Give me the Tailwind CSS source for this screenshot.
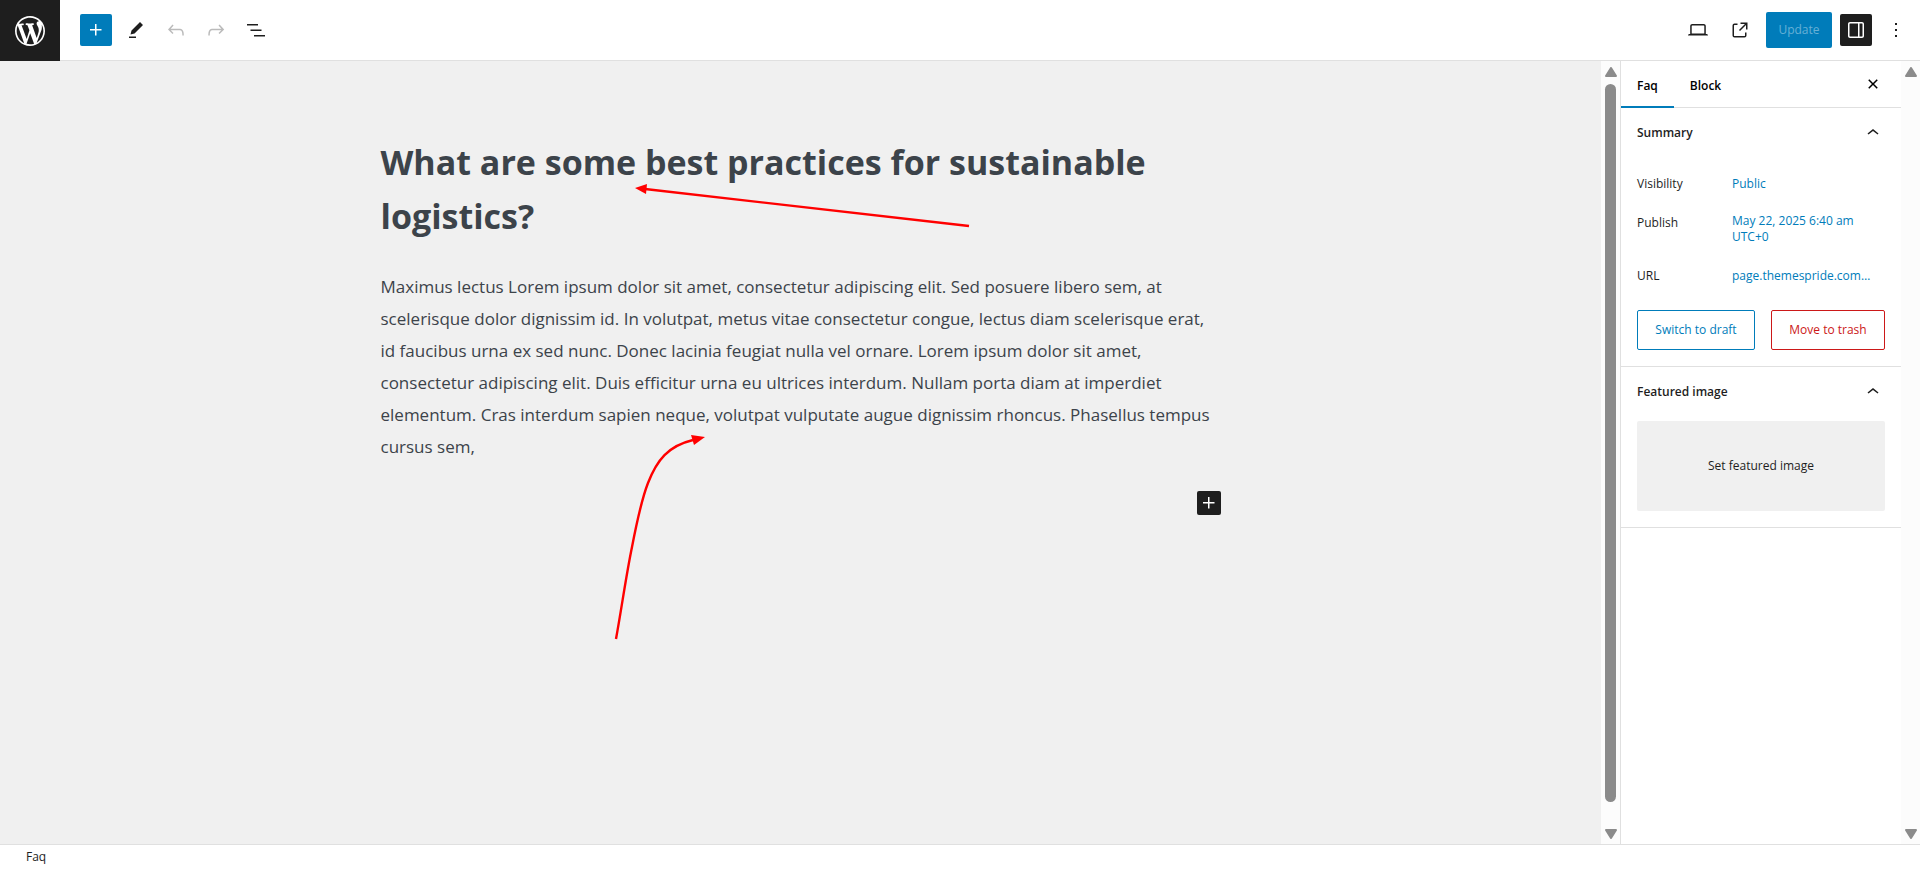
<!DOCTYPE html>
<html lang="en">
<head>
    <meta charset="UTF-8">
    <meta name="viewport" content="width=device-width, initial-scale=1.0">
    <title>Edit Faq</title>
    <script src="https://cdn.jsdelivr.net/npm/@tailwindcss/browser@4"></script>
</head>
<body class="flex flex-col h-screen overflow-hidden bg-white text-[#1e1e1e] text-xs font-['Open_Sans',sans-serif]">

    <!-- Top toolbar -->
    <header class="flex items-stretch justify-between shrink-0 h-[61px]">
        <div class="flex items-stretch">
            <a href="#" aria-label="View Posts" class="w-[60px] bg-[#1e1e1e] text-white flex items-center justify-center">
                <svg class="size-9" viewBox="-2 -2 24 24" fill="currentColor"><path d="M20 10c0-5.51-4.49-10-10-10C4.48 0 0 4.49 0 10c0 5.52 4.48 10 10 10 5.51 0 10-4.48 10-10zM7.78 15.37L4.37 6.22c.55-.02 1.17-.08 1.17-.08.5-.06.44-1.13-.06-1.11 0 0-1.45.11-2.37.11-.18 0-.37 0-.58-.01C4.12 2.69 6.87 1.11 10 1.11c2.33 0 4.45.87 6.05 2.34-.68-.11-1.65.39-1.65 1.58 0 .74.45 1.36.9 2.1.35.61.55 1.36.55 2.46 0 1.49-1.4 5-1.4 5l-3.03-8.37c.54-.02.82-.17.82-.17.5-.05.44-1.25-.06-1.22 0 0-1.44.12-2.38.12-.87 0-2.33-.12-2.33-.12-.5-.03-.56 1.2-.06 1.22l.92.08 1.26 3.41zM17.41 10c.24-.64.74-1.87.43-4.25.7 1.29 1.05 2.71 1.05 4.25 0 3.29-1.73 6.24-4.4 7.78.97-2.59 1.94-5.2 2.92-7.78zM6.1 18.09C3.12 16.65 1.11 13.53 1.11 10c0-1.3.23-2.48.72-3.59C3.25 10.3 4.67 14.2 6.1 18.09zm4.03-6.63l2.58 6.98c-.86.29-1.76.45-2.71.45-.79 0-1.57-.11-2.29-.33.81-2.38 1.62-4.74 2.42-7.10z"/></svg>
            </a>
        </div>
        <div class="flex flex-1 items-center justify-between border-b border-[#e0e0e0] pl-5 pr-2">
            <div class="flex items-center gap-2">
                <button aria-label="Add block" class="size-8 rounded-[2px] bg-[#007cba] text-white flex items-center justify-center">
                    <svg class="size-6" viewBox="0 0 24 24" fill="currentColor"><path d="M11 12.5V17.5H12.5V12.5H17.5V11H12.5V6H11V11H6V12.5H11Z"/></svg>
                </button>
                <button aria-label="Tools" class="size-8 flex items-center justify-center">
                    <svg class="size-6" viewBox="0 0 24 24" fill="currentColor"><path d="m19 7-3-3-8.5 8.5-1 4 4-1L19 7Zm-7 11.5H5V20h7v-1.5Z"/></svg>
                </button>
                <button aria-label="Undo" disabled class="size-8 flex items-center justify-center text-[#bbb]">
                    <svg class="size-6" viewBox="0 0 24 24" fill="currentColor"><path d="M18.3 11.7c-.6-.6-1.4-.9-2.3-.9H6.7l2.9-3.3-1.1-1-4.5 5L8.5 16l1-1-2.7-2.7H16c.5 0 .9.2 1.3.5 1 1 1 3.4 1 4.5v.3h1.5v-.2c0-1.5 0-4.3-1.5-5.7z"/></svg>
                </button>
                <button aria-label="Redo" disabled class="size-8 flex items-center justify-center text-[#bbb]">
                    <svg class="size-6" viewBox="0 0 24 24" fill="currentColor"><path d="M15.6 6.5l-1.1 1 2.9 3.3H8c-.9 0-1.7.3-2.3.9-1.4 1.5-1.4 4.2-1.4 5.6v.2h1.5v-.3c0-1.1 0-3.5 1-4.5.3-.3.7-.5 1.3-.5h9.2L14.5 15l1.1 1.1 4.6-4.6-4.6-5z"/></svg>
                </button>
                <button aria-label="Document overview" class="size-8 flex items-center justify-center">
                    <svg class="size-6" viewBox="0 0 24 24" fill="currentColor"><path d="M3 6h11v1.5H3V6Zm3.5 5.5h11V13h-11v-1.5ZM21 17H10v1.5h11V17Z"/></svg>
                </button>
            </div>
            <div class="flex items-center gap-2">
                <button aria-label="Preview" class="size-8 flex items-center justify-center">
                    <svg class="size-6" viewBox="0 0 24 24" fill="currentColor"><path d="M20.5 16h-.7V8c0-1.1-.9-2-2-2H6.2c-1.1 0-2 .9-2 2v8h-.7c-.8 0-1.5.7-1.5 1.5h20c0-.8-.7-1.5-1.5-1.5zM5.7 8c0-.3.2-.5.5-.5h11.6c.3 0 .5.2.5.5v7.6H5.7V8z"/></svg>
                </button>
                <a href="#" aria-label="View Faq" class="w-9 h-8 flex items-center justify-center">
                    <svg class="size-6" viewBox="0 0 24 24" fill="currentColor"><path d="M19.5 4.5h-7V6h4.44l-5.97 5.97 1.06 1.06L18 7.06v4.44h1.5v-7Zm-13 1a2 2 0 0 0-2 2v10a2 2 0 0 0 2 2h10a2 2 0 0 0 2-2v-3H17v3a.5.5 0 0 1-.5.5h-10a.5.5 0 0 1-.5-.5v-10a.5.5 0 0 1 .5-.5h3V5.5h-3Z"/></svg>
                </a>
                <button disabled class="h-9 w-[66px] rounded-[2px] bg-[#007cba] text-[#66b0d6]">Update</button>
                <button aria-label="Settings" class="size-8 rounded-[2px] bg-[#1e1e1e] text-white flex items-center justify-center">
                    <svg class="size-6" viewBox="0 0 24 24" fill="currentColor"><path d="M18 4H6c-1.1 0-2 .9-2 2v12c0 1.1.9 2 2 2h12c1.1 0 2-.9 2-2V6c0-1.1-.9-2-2-2zm-4 14.5H6c-.3 0-.5-.2-.5-.5V6c0-.3.2-.5.5-.5h8v13zm4.5-.5c0 .3-.2.5-.5.5h-2.5v-13H18c.3 0 .5.2.5.5v12z"/></svg>
                </button>
                <button aria-label="Options" class="size-8 flex items-center justify-center">
                    <svg class="size-6" viewBox="0 0 24 24" fill="currentColor"><path d="M13 19h-2v-2h2v2zm0-6h-2v-2h2v2zm0-6h-2V5h2v2z"/></svg>
                </button>
            </div>
        </div>
    </header>

    <div class="flex flex-1 min-h-0">
        <!-- Canvas -->
        <main class="flex-1 bg-[#f0f0f0] text-[#3c434a] pt-[74px]">
            <article class="relative w-[840px] max-w-full mx-auto">
                <h1 class="text-[34px] leading-[54px] font-bold">What are some best practices for sustainable logistics?</h1>
                <p class="mt-7 text-[17px] leading-8">Maximus lectus Lorem ipsum dolor sit amet, consectetur adipiscing elit. Sed posuere libero sem, at scelerisque dolor dignissim id. In volutpat, metus vitae consectetur congue, lectus diam scelerisque erat, id faucibus urna ex sed nunc. Donec lacinia feugiat nulla vel ornare. Lorem ipsum dolor sit amet, consectetur adipiscing elit. Duis efficitur urna eu ultrices interdum. Nullam porta diam at imperdiet elementum. Cras interdum sapien neque, volutpat vulputate augue dignissim rhoncus. Phasellus tempus cursus sem,</p>
                <div class="flex justify-end mt-7">
                    <button aria-label="Add block" class="size-6 rounded-[2px] bg-[#1e1e1e] text-white flex items-center justify-center">
                        <svg class="size-6" viewBox="0 0 24 24" fill="currentColor"><path d="M11 12.5V17.5H12.5V12.5H17.5V11H12.5V6H11V11H6V12.5H11Z"/></svg>
                    </button>
                </div>
                <!-- Arrows over the text -->
                <svg class="absolute top-0 left-0 pointer-events-none" width="840" height="520" viewBox="381 135 840 520" fill="none" stroke="#f00" stroke-width="2.4">
                    <path d="M969 226 645 189"/>
                    <path d="M635 188 647 184 646 194Z" fill="#f00" stroke="none"/>
                    <path d="M616 639C622 606 626 576 632 547C637 521 641 501 648 483C657 460 668 446 693 440"/>
                    <path d="M705 437 691 435 694 445Z" fill="#f00" stroke="none"/>
                </svg>
            </article>
        </main>
        <div class="flex flex-col items-center w-[19px] bg-[#fcfcfc] pt-1.5 pb-[5px]">
            <svg class="text-[#8b8b8b]" width="12" height="10" viewBox="0 0 12 10"><path d="M6 1 11 9H1Z" fill="currentColor" stroke="currentColor" stroke-width="2" stroke-linejoin="round"/></svg>
            <div class="flex-1 w-[11px] mt-[7px] mb-[27px] rounded-full bg-[#8b8b8b]"></div>
            <svg class="text-[#8b8b8b]" width="12" height="10" viewBox="0 0 12 10"><path d="M6 9 11 1H1Z" fill="currentColor" stroke="currentColor" stroke-width="2" stroke-linejoin="round"/></svg>
        </div>

        <!-- Settings sidebar -->
        <aside class="w-[281px] border-l border-[#e0e0e0]">
            <div class="flex items-stretch h-[47px] border-b border-[#e0e0e0] pr-4 font-semibold text-black">
                <button class="px-4 pt-1 -mb-px border-b-2 border-[#007cba]">Faq</button>
                <button class="px-4 pt-1 -mb-px border-b-2 border-transparent">Block</button>
                <button aria-label="Close settings" class="ml-auto self-center">
                    <svg class="size-6" viewBox="0 0 24 24" fill="currentColor"><path d="M12 13.06l3.712 3.713 1.061-1.06L13.061 12l3.712-3.712-1.06-1.06L12 10.938 8.288 7.227l-1.061 1.06L10.939 12l-3.712 3.712 1.06 1.061L12 13.061z"/></svg>
                </button>
            </div>
            <section class="px-4 pb-4 border-b border-[#e0e0e0]">
                <h2>
                    <button class="flex items-center justify-between w-full h-[50px] font-semibold">Summary
                        <svg class="size-6" viewBox="0 0 24 24" fill="currentColor"><path d="M6.5 12.4L12 8l5.5 4.4-.9 1.2L12 10l-4.5 3.6-1-1.2z"/></svg>
                    </button>
                </h2>
                <div class="flex mt-2 py-2 leading-5">
                    <span class="w-[95px] shrink-0">Visibility</span>
                    <a href="#" class="text-[#007cba]">Public</a>
                </div>
                <div class="flex mt-[3px] py-2 leading-4">
                    <span class="w-[95px] shrink-0 pt-0.5">Publish</span>
                    <a href="#" class="text-[#007cba]">May 22, 2025 6:40 am UTC+0</a>
                </div>
                <div class="flex mt-[5px] py-2 leading-5">
                    <span class="w-[95px] shrink-0">URL</span>
                    <a href="#" class="text-[#007cba]">page.themespride.com…</a>
                </div>
                <div class="flex gap-4 mt-4">
                    <button class="h-10 w-[118px] rounded-[2px] border border-[#007cba] text-[#007cba]">Switch to draft</button>
                    <button class="h-10 flex-1 rounded-[2px] border border-[#cc1818] text-[#cc1818]">Move to trash</button>
                </div>
            </section>
            <section class="px-4 pb-4 border-b border-[#e0e0e0]">
                <h2>
                    <button class="flex items-center justify-between w-full h-[54px] pb-1 font-semibold">Featured image
                        <svg class="size-6" viewBox="0 0 24 24" fill="currentColor"><path d="M6.5 12.4L12 8l5.5 4.4-.9 1.2L12 10l-4.5 3.6-1-1.2z"/></svg>
                    </button>
                </h2>
                <button class="w-full h-[90px] rounded-[2px] bg-[#f0f0f0]">Set featured image</button>
            </section>
        </aside>
        <div class="flex flex-col items-center justify-between w-[19px] bg-[#fcfcfc] pt-1.5 pb-[5px]">
            <svg class="text-[#8b8b8b]" width="12" height="10" viewBox="0 0 12 10"><path d="M6 1 11 9H1Z" fill="currentColor" stroke="currentColor" stroke-width="2" stroke-linejoin="round"/></svg>
            <svg class="text-[#8b8b8b]" width="12" height="10" viewBox="0 0 12 10"><path d="M6 9 11 1H1Z" fill="currentColor" stroke="currentColor" stroke-width="2" stroke-linejoin="round"/></svg>
        </div>
    </div>

    <footer class="flex items-center shrink-0 h-[25px] border-t border-[#e0e0e0] pl-[26px]">Faq</footer>
</body>
</html>
